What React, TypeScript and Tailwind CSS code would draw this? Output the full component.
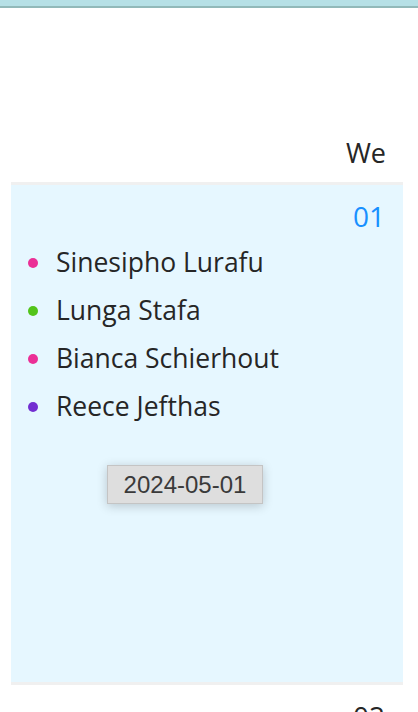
const people = [
  { name: "Sinesipho Lurafu", color: "bg-[#eb2f96]" },
  { name: "Lunga Stafa", color: "bg-[#52c41a]" },
  { name: "Bianca Schierhout", color: "bg-[#eb2f96]" },
  { name: "Reece Jefthas", color: "bg-[#722ed1]" },
];

export default function App() {
  return (
    <div className="relative h-[712px] overflow-hidden bg-white font-['Open_Sans','Noto_Sans',sans-serif] text-[#262626]">
      <div className="h-[8px] border-b-2 border-[#92b9b9] bg-[#b6e0e6]" />

      <div className="pr-[32px] pt-[123px] text-right text-[27px] leading-[44px]">We</div>

      <div className="ml-[11px] mt-[7px] w-[392px]">
        <div className="relative h-[500px] border-t-[3px] border-[#f0f0f0] bg-[#e6f7ff]">
          <div className="pr-[18px] pt-[13px] text-right text-[28px] leading-[36px] text-[#1890ff]">01</div>
          <ul className="mt-[5px] flex flex-col">
            {people.map((p) => (
              <li key={p.name} className="flex h-[48px] items-center gap-[18px] pl-[17px] text-[26.5px]">
                <span className={`h-[10px] w-[10px] shrink-0 rounded-full ${p.color}`} />
                <span>{p.name}</span>
              </li>
            ))}
          </ul>

          <div className="absolute left-[96px] top-[280px] flex h-[39px] w-[156px] items-center justify-center border border-[#c4c4c4] bg-[#dedede] font-['Liberation_Sans',Arial,sans-serif] text-[24px] text-[#3a3a3a] shadow-[0_2px_10px_rgba(0,0,0,0.2)]">
            2024-05-01
          </div>
        </div>
        <div className="border-t-[3px] border-[#f0f0f0] pr-[18px] pt-[13px] text-right text-[28px] leading-[36px]">02</div>
      </div>
    </div>
  );
}
